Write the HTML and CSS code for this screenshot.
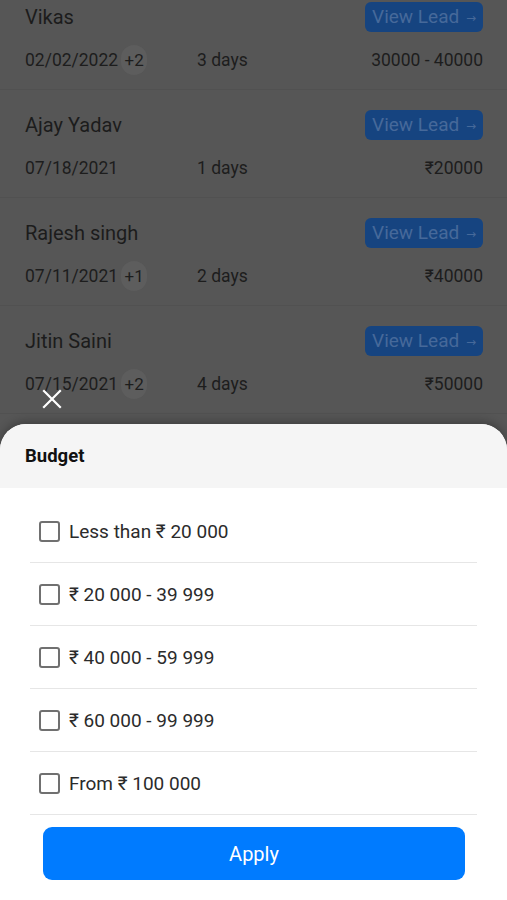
FILE: index.html
```html
<!DOCTYPE html>
<html>
<head>
<meta charset="utf-8">
<link rel="stylesheet" href="styles.css">
</head>
<body>
<div class="screen">
  <div class="leads">
    <div class="lead">
      <div class="lead-top"><span class="name">Vikas</span><span class="view">View Lead <span class="arrow">→</span></span></div>
      <div class="lead-info"><span class="date">02/02/2022<span class="badge">+2</span></span><span class="days">3 days</span><span class="amount">30000 - 40000</span></div>
    </div>
    <div class="lead">
      <div class="lead-top"><span class="name">Ajay Yadav</span><span class="view">View Lead <span class="arrow">→</span></span></div>
      <div class="lead-info"><span class="date">07/18/2021</span><span class="days">1 days</span><span class="amount">₹20000</span></div>
    </div>
    <div class="lead">
      <div class="lead-top"><span class="name">Rajesh singh</span><span class="view">View Lead <span class="arrow">→</span></span></div>
      <div class="lead-info"><span class="date">07/11/2021<span class="badge">+1</span></span><span class="days">2 days</span><span class="amount">₹40000</span></div>
    </div>
    <div class="lead">
      <div class="lead-top"><span class="name">Jitin Saini</span><span class="view">View Lead <span class="arrow">→</span></span></div>
      <div class="lead-info"><span class="date">07/15/2021<span class="badge">+2</span></span><span class="days">4 days</span><span class="amount">₹50000</span></div>
    </div>
  </div>

  <div class="close" aria-label="Close">
    <svg width="20" height="20" viewBox="0 0 20 20"><path d="M2 2 L18 18 M18 2 L2 18" stroke="#fff" stroke-width="2.2" stroke-linecap="square"/></svg>
  </div>

  <div class="sheet">
    <div class="sheet-head">Budget</div>
    <ul class="options">
      <li class="option"><span class="box"></span>Less than ₹ 20 000</li>
      <li class="option"><span class="box"></span>₹ 20 000 - 39 999</li>
      <li class="option"><span class="box"></span>₹ 40 000 - 59 999</li>
      <li class="option"><span class="box"></span>₹ 60 000 - 99 999</li>
      <li class="option"><span class="box"></span>From ₹ 100 000</li>
    </ul>
    <div class="apply-wrap"><button class="apply">Apply</button></div>
  </div>
</div>
</body>
</html>
```

FILE: styles.css
```css
* { box-sizing: border-box; }
html, body { margin: 0; padding: 0; }
body {
  font-family: Roboto, "Noto Sans", "DejaVu Sans", sans-serif;
  background: #565656;
  width: 507px;
  height: 900px;
  overflow: hidden;
}
.screen {
  position: relative;
  height: 900px;
  display: flex;
  flex-direction: column;
}
.leads {
  margin-top: -18px;
  flex: 1;
}
.lead {
  padding: 20px 24px 14px 25px;
  border-bottom: 1px solid #515151;
}
.lead-top {
  display: flex;
  justify-content: space-between;
  align-items: center;
  height: 30px;
}
.name {
  font-size: 20px;
  color: #1c1c1c;
}
.view {
  background: #164480;
  color: #46699a;
  font-size: 19px;
  height: 30px;
  line-height: 30px;
  padding: 0 7px 0 7px;
  border-radius: 6px;
}
.arrow { font-size: 12px; margin-left: 2px; vertical-align: 1px; }
.lead-info {
  margin-top: 13px;
  height: 30px;
  display: flex;
  align-items: center;
  font-size: 17.5px;
  color: #1d1d1d;
}
.date {
  width: 172px;
  display: flex;
  align-items: center;
}
.badge {
  display: inline-flex;
  align-items: center;
  justify-content: center;
  width: 26px;
  height: 30px;
  border-radius: 13px;
  background: #5d5d5d;
  margin-left: 3px;
  font-size: 17px;
}
.days { flex: 1; }
.amount { text-align: right; }

.close {
  position: absolute;
  left: 42px;
  top: 389px;
  width: 20px;
  height: 20px;
}
.close svg { display: block; }

.sheet {
  position: absolute;
  left: 0;
  right: 0;
  bottom: 0;
  height: 476px;
  background: #fff;
  border-radius: 26px 26px 0 0;
  overflow: hidden;
  box-shadow: 0 -3px 8px rgba(0,0,0,0.25);
}
.sheet-head {
  height: 64px;
  background: #f5f5f5;
  padding-left: 25px;
  display: flex;
  align-items: center;
  font-weight: 700;
  font-size: 18.5px;
  color: #111;
}
.options {
  list-style: none;
  margin: 0;
  padding: 12px 30px 0 30px;
}
.option {
  height: 63px;
  display: flex;
  align-items: center;
  padding-left: 9px;
  border-bottom: 1px solid #e6e6e6;
  font-size: 19px;
  color: #2b2b2b;
}
.box {
  width: 21px;
  height: 21px;
  border: 2px solid #707070;
  border-radius: 3px;
  margin-right: 9px;
  flex: none;
}
.apply-wrap {
  padding: 12px 42px 0 43px;
}
.apply {
  display: block;
  width: 100%;
  height: 53px;
  border: none;
  border-radius: 9px;
  background: #007bff;
  color: #fff;
  font-family: Roboto, "Noto Sans", sans-serif;
  font-size: 20px;
}
```
